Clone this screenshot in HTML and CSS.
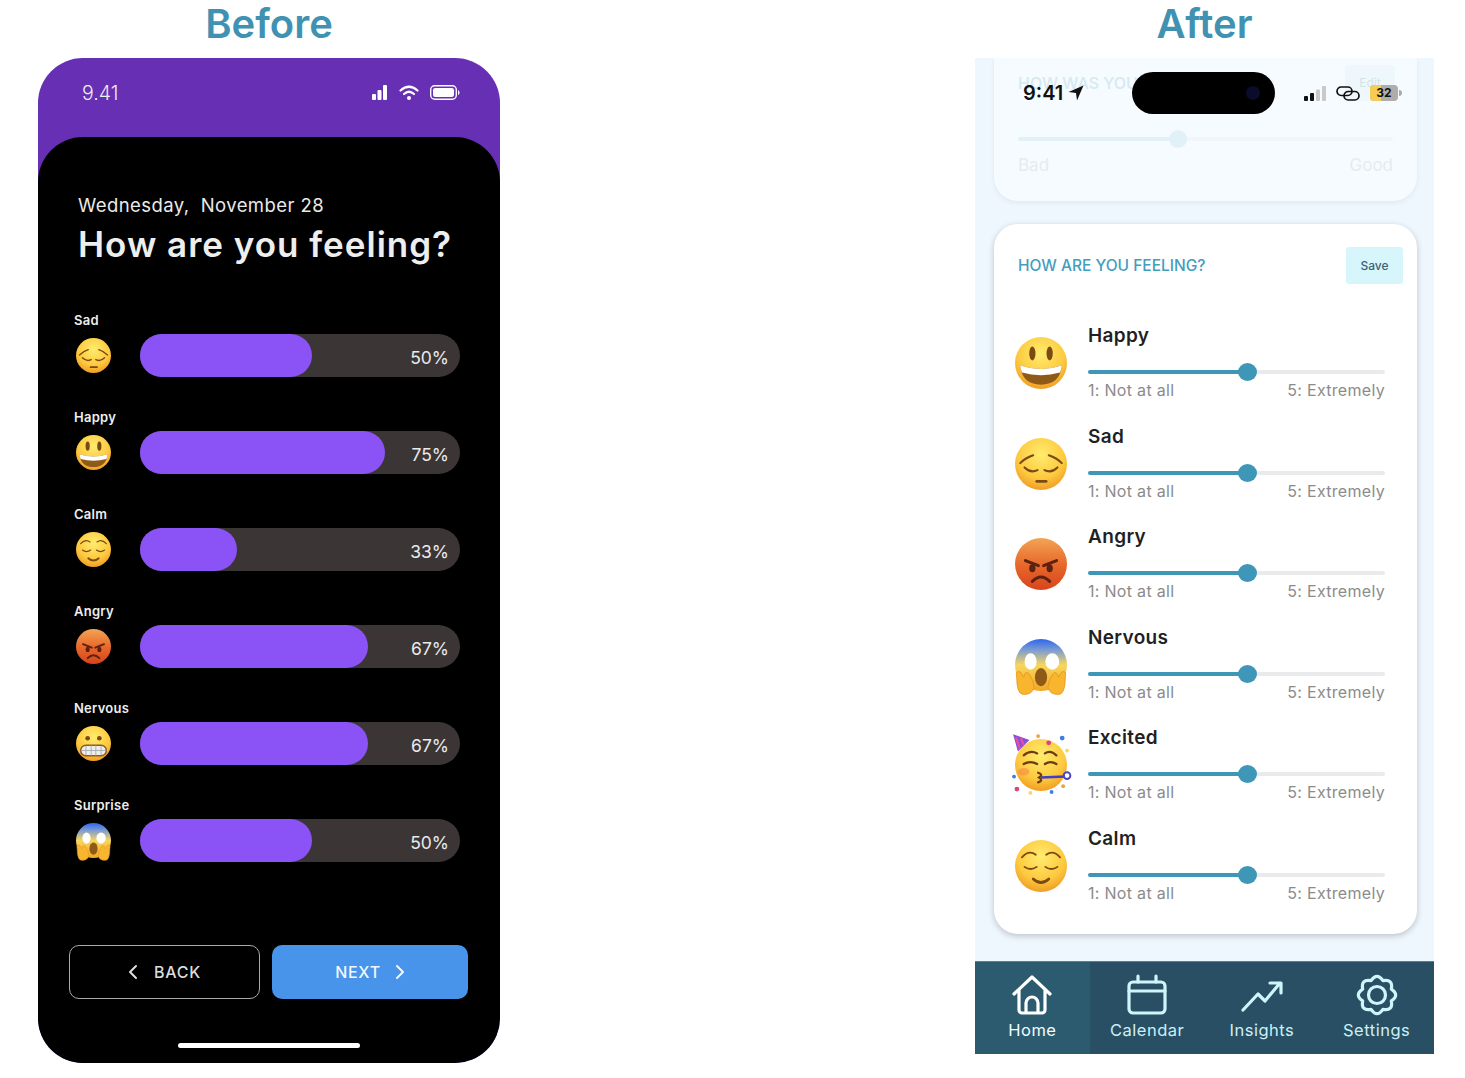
FILE: index.html
```html
<!DOCTYPE html>
<html lang="en">
<head>
<meta charset="utf-8">
<title>Before and After</title>
<link rel="stylesheet" href="styles.css">
</head>
<body>
<svg class="defs" width="0" height="0" aria-hidden="true">
  <defs>
    <radialGradient id="g-face" cx="50%" cy="32%" r="70%">
      <stop offset="0" stop-color="#ffec6e"/><stop offset=".65" stop-color="#fdc93f"/><stop offset="1" stop-color="#ef9a22"/>
    </radialGradient>
    <linearGradient id="g-angry" x1="0" y1="0" x2="0" y2="1">
      <stop offset="0" stop-color="#f2a454"/><stop offset=".5" stop-color="#e86a2c"/><stop offset="1" stop-color="#d8431b"/>
    </linearGradient>
    <linearGradient id="g-scream" x1="0" y1="0" x2="0" y2="1">
      <stop offset="0" stop-color="#2e66ee"/><stop offset=".22" stop-color="#7f9ed0"/><stop offset=".5" stop-color="#f7d65c"/><stop offset="1" stop-color="#f3a726"/>
    </linearGradient>
    <symbol id="e-happy" viewBox="2 2 60 60">
      <circle cx="32" cy="32" r="30" fill="url(#g-face)"/>
      <ellipse cx="22" cy="21" rx="3.600" ry="8" fill="#7a4a12"/><ellipse cx="42" cy="21" rx="3.600" ry="8" fill="#7a4a12"/>
      <path d="M8 35Q32 43 56 35Q54 57 32 57Q10 57 8 35Z" fill="#8f5a18"/>
      <path d="M8 35Q32 43 56 35Q55.600 40 54 43Q32 49 10 43Q8.400 40 8 35Z" fill="#fff"/>
    </symbol>
    <symbol id="e-sad" viewBox="2 2 60 60">
      <circle cx="32" cy="32" r="30" fill="url(#g-face)"/>
      <g fill="none" stroke="#7a4a12" stroke-width="2.400" stroke-linecap="round">
        <path d="M8 31Q14 25 23 22"/><path d="M56 31Q50 25 41 22"/>
        <path d="M13 36Q20 43 28 39"/><path d="M51 36Q44 43 36 39"/>
        <path d="M27 52H38" stroke-width="3"/>
      </g>
    </symbol>
    <symbol id="e-calm" viewBox="2 2 60 60">
      <circle cx="32" cy="32" r="30" fill="url(#g-face)"/>
      <g fill="none" stroke="#7a4a12" stroke-width="2.100" stroke-linecap="round">
        <path d="M10 22Q18 13 26 19"/><path d="M54 22Q46 13 38 19"/>
        <path d="M13 33Q20 38 27 33"/><path d="M51 33Q44 38 37 33"/>
        <path d="M23 47Q32 55 41 47" stroke-width="3.200"/>
      </g>
    </symbol>
    <symbol id="e-angry" viewBox="2 2 60 60">
      <circle cx="32" cy="32" r="30" fill="url(#g-angry)"/>
      <path d="M14 28L29 34" stroke="#5c2110" stroke-width="3.400" stroke-linecap="round"/>
      <path d="M50 28L35 34" stroke="#5c2110" stroke-width="3.400" stroke-linecap="round"/>
      <ellipse cx="22" cy="37" rx="3.600" ry="4.600" fill="#5c2110"/><ellipse cx="42" cy="37" rx="3.600" ry="4.600" fill="#5c2110"/>
      <path d="M22 52Q32 42 42 52" fill="none" stroke="#5c2110" stroke-width="3.400" stroke-linecap="round"/>
    </symbol>
    <symbol id="e-scream" viewBox="2 2 60 60">
      <circle cx="32" cy="32" r="30" fill="url(#g-scream)"/>
      <ellipse cx="20" cy="28" rx="7" ry="9.500" fill="#fff"/><ellipse cx="45" cy="28" rx="8" ry="9.500" fill="#fff"/>
      <ellipse cx="32" cy="46" rx="7" ry="10.500" fill="#8f5a18"/>
      <path d="M4 46Q2 38 8 40L12 46Q14 38 18 42Q24 50 24 58Q22 66 12 66Q4 66 4 46Z" fill="#f8b62f" stroke="#e8961c"/>
      <path d="M60 46Q62 38 56 40L52 46Q50 38 46 42Q40 50 40 58Q42 66 52 66Q60 66 60 46Z" fill="#f8b62f" stroke="#e8961c"/>
    </symbol>
    <symbol id="e-grimace" viewBox="2 2 60 60">
      <circle cx="32" cy="32" r="30" fill="url(#g-face)"/>
      <circle cx="22" cy="23" r="4" fill="#7a4a12"/><circle cx="42" cy="23" r="4" fill="#7a4a12"/>
      <rect x="10" y="35" width="44" height="18" rx="9" fill="#eee" stroke="#8f5a18" stroke-width="2.500"/>
      <path d="M10 44H54M19 36V52M28 35V53M36 35V53M45 36V52" stroke="#a8a8a8" stroke-width="1.500"/>
    </symbol>
    <symbol id="e-party" viewBox="6 8 54 54">
      <circle cx="33" cy="35" r="27" fill="url(#g-face)"/>
      <ellipse cx="15" cy="42" rx="6" ry="4" fill="#f58a4a" opacity=".6"/>
      <path d="M4 3L21 9L9 21Z" fill="#8a4fd8"/>
      <path d="M7 6L11 18M12 7L15 14" stroke="#e84fa0" stroke-width="2.200"/>
      <g fill="none" stroke="#6b3c10" stroke-width="2.300" stroke-linecap="round">
        <path d="M15 25Q22 19 29 23"/><path d="M37 23Q43 19 49 25"/>
        <path d="M15 34Q22 30 29 34"/><path d="M37 34Q43 30 49 34"/>
        <path d="M30 43Q36 45 31 48Q36 51 30 53"/>
      </g>
      <path d="M33 48L58 47" stroke="#3e3fc4" stroke-width="2.500"/>
      <circle cx="60" cy="46" r="3.500" fill="none" stroke="#4d45c8" stroke-width="2"/>
      <circle cx="30" cy="5" r="2" fill="#f0a23a"/><circle cx="41" cy="12" r="2.500" fill="#d9467a"/>
      <circle cx="55" cy="7" r="2.500" fill="#3d7fe0"/><circle cx="60" cy="20" r="2" fill="#f6d95a"/>
      <circle cx="5" cy="47" r="2" fill="#3d7fe0"/><circle cx="8" cy="60" r="2.500" fill="#d9467a"/>
      <circle cx="22" cy="64" r="2" fill="#f6d95a"/><circle cx="44" cy="63" r="2" fill="#3d7fe0"/><circle cx="56" cy="57" r="2" fill="#f0a23a"/>
    </symbol>
  </defs>
</svg>

<main class="page">
  <section class="column">
    <h1 class="title">Before</h1>
    <div class="phone-before">
      <div class="status-before">
        <span class="clock-before">9.41</span>
        <div class="status-icons-before">
          <svg class="ic-signal" viewBox="0 0 16 15"><rect x="0" y="9" width="4" height="6" rx="1"/><rect x="5.500" y="5" width="4" height="10" rx="1"/><rect x="11" y="0" width="4" height="15" rx="1"/></svg>
          <svg class="ic-wifi" viewBox="0 0 20 15"><path d="M1.500 5.500Q10-2 18.500 5.500" fill="none" stroke="#fff" stroke-width="2.200" stroke-linecap="round"/><path d="M5 9Q10 4.500 15 9" fill="none" stroke="#fff" stroke-width="2.200" stroke-linecap="round"/><circle cx="10" cy="13" r="2"/></svg>
          <svg class="ic-batt" viewBox="0 0 30 15"><rect x=".7" y=".7" width="25.600" height="13.600" rx="4" fill="none" stroke="#fff" stroke-width="1.400"/><rect x="3" y="3" width="21" height="9" rx="2.200"/><path d="M28 5v5q1.500-.5 1.500-2.500T28 5Z"/></svg>
        </div>
      </div>
      <div class="panel">
        <p class="date">Wednesday, &nbsp;November 28</p>
        <h2 class="question">How are you feeling?</h2>
        <div class="moods">
          <div class="mood">
            <div class="mood-label">Sad</div>
            <div class="mood-row"><svg class="mood-emoji"><use href="#e-sad"/></svg><div class="track"><div class="fill" style="width:172px"></div><span class="pct">50%</span></div></div>
          </div>
          <div class="mood">
            <div class="mood-label">Happy</div>
            <div class="mood-row"><svg class="mood-emoji"><use href="#e-happy"/></svg><div class="track"><div class="fill" style="width:245px"></div><span class="pct">75%</span></div></div>
          </div>
          <div class="mood">
            <div class="mood-label">Calm</div>
            <div class="mood-row"><svg class="mood-emoji"><use href="#e-calm"/></svg><div class="track"><div class="fill" style="width:97px"></div><span class="pct">33%</span></div></div>
          </div>
          <div class="mood">
            <div class="mood-label">Angry</div>
            <div class="mood-row"><svg class="mood-emoji"><use href="#e-angry"/></svg><div class="track"><div class="fill" style="width:228px"></div><span class="pct">67%</span></div></div>
          </div>
          <div class="mood">
            <div class="mood-label">Nervous</div>
            <div class="mood-row"><svg class="mood-emoji"><use href="#e-grimace"/></svg><div class="track"><div class="fill" style="width:228px"></div><span class="pct">67%</span></div></div>
          </div>
          <div class="mood">
            <div class="mood-label">Surprise</div>
            <div class="mood-row"><svg class="mood-emoji"><use href="#e-scream"/></svg><div class="track"><div class="fill" style="width:172px"></div><span class="pct">50%</span></div></div>
          </div>
        </div>
        <div class="actions">
          <button class="btn btn-back"><svg class="chev" viewBox="0 0 10 16"><path d="M8 2L2 8L8 14"/></svg>BACK</button>
          <button class="btn btn-next">NEXT<svg class="chev" viewBox="0 0 10 16"><path d="M2 2L8 8L2 14"/></svg></button>
        </div>
        <div class="home-bar"></div>
      </div>
    </div>
  </section>

  <section class="column">
    <h1 class="title">After</h1>
    <div class="phone-after">
      <div class="status-after">
        <div class="time-after"><span>9:41</span><svg class="ic-loc" viewBox="0 0 16 16"><path d="M15.500.5L9 15.500L8 8L.5 7Z"/></svg></div>
        <div class="island"><span class="camera"></span></div>
        <div class="status-icons-after">
          <svg class="ic-signal2" viewBox="0 0 22 15"><rect x="0" y="10" width="4" height="5" rx="1" fill="#111"/><rect x="6" y="7" width="4" height="8" rx="1" fill="#111"/><rect x="12" y="3.500" width="4" height="11.500" rx="1" fill="#c9c9c9"/><rect x="18" y="0" width="4" height="15" rx="1" fill="#c9c9c9"/></svg>
          <svg class="ic-link" viewBox="0 0 24 15"><rect x="1" y="1" width="15" height="8.500" rx="4.200" fill="none" stroke="#111" stroke-width="1.700"/><rect x="8" y="5.500" width="15" height="8.500" rx="4.200" fill="none" stroke="#111" stroke-width="1.700"/></svg>
          <div class="battery"><span class="battery-level"></span><span class="battery-num">32</span></div>
          <span class="battery-tip"></span>
        </div>
      </div>

      <div class="faded-card">
        <div class="faded-head"><span class="faded-title">HOW WAS YOUR DAY?</span><span class="faded-edit">Edit</span></div>
        <div class="faded-slider"><div class="faded-fill"></div><span class="faded-thumb"></span></div>
        <div class="faded-labels"><span>Bad</span><span>Good</span></div>
      </div>

      <div class="card">
        <div class="card-head"><span class="card-title">HOW ARE YOU FEELING?</span><span class="save">Save</span></div>
        <div class="feelings">
          <div class="feeling"><svg class="feeling-emoji"><use href="#e-happy"/></svg><div class="feeling-body"><div class="feeling-name">Happy</div><div class="slider"><div class="slider-fill"></div><span class="thumb"></span></div><div class="scale"><span>1: Not at all</span><span>5: Extremely</span></div></div></div>
          <div class="feeling"><svg class="feeling-emoji"><use href="#e-sad"/></svg><div class="feeling-body"><div class="feeling-name">Sad</div><div class="slider"><div class="slider-fill"></div><span class="thumb"></span></div><div class="scale"><span>1: Not at all</span><span>5: Extremely</span></div></div></div>
          <div class="feeling"><svg class="feeling-emoji"><use href="#e-angry"/></svg><div class="feeling-body"><div class="feeling-name">Angry</div><div class="slider"><div class="slider-fill"></div><span class="thumb"></span></div><div class="scale"><span>1: Not at all</span><span>5: Extremely</span></div></div></div>
          <div class="feeling"><svg class="feeling-emoji"><use href="#e-scream"/></svg><div class="feeling-body"><div class="feeling-name">Nervous</div><div class="slider"><div class="slider-fill"></div><span class="thumb"></span></div><div class="scale"><span>1: Not at all</span><span>5: Extremely</span></div></div></div>
          <div class="feeling"><svg class="feeling-emoji"><use href="#e-party"/></svg><div class="feeling-body"><div class="feeling-name">Excited</div><div class="slider"><div class="slider-fill"></div><span class="thumb"></span></div><div class="scale"><span>1: Not at all</span><span>5: Extremely</span></div></div></div>
          <div class="feeling"><svg class="feeling-emoji"><use href="#e-calm"/></svg><div class="feeling-body"><div class="feeling-name">Calm</div><div class="slider"><div class="slider-fill"></div><span class="thumb"></span></div><div class="scale"><span>1: Not at all</span><span>5: Extremely</span></div></div></div>
        </div>
      </div>

      <nav class="tabbar">
        <div class="tab tab-active">
          <svg class="tab-icon tab-icon-home" viewBox="0 0 46 46"><path d="M5 22L23 5L41 22M10 18V38a3 3 0 0 0 3 3H33a3 3 0 0 0 3-3V18M17 41V31a6 6 0 0 1 12 0V41"/></svg>
          <span>Home</span>
        </div>
        <div class="tab">
          <svg class="tab-icon" viewBox="0 0 46 46"><rect x="5" y="10" width="36" height="31" rx="4"/><path d="M5 19H41M14 4V10M32 4V10"/></svg>
          <span>Calendar</span>
        </div>
        <div class="tab">
          <svg class="tab-icon" viewBox="0 0 46 46"><path d="M4 38L19 22L26 29L41 11M31 11H42V21"/></svg>
          <span>Insights</span>
        </div>
        <div class="tab">
          <svg class="tab-icon" viewBox="0 0 46 46"><path d="M37.320 17.070Q46 23 37.320 28.930Q39.260 39.260 28.930 37.320Q23 46 17.070 37.320Q6.740 39.260 8.680 28.930Q0 23 8.680 17.070Q6.740 6.740 17.070 8.680Q23 0 28.930 8.680Q39.260 6.740 37.320 17.070Z"/><circle cx="23" cy="23" r="8.500"/></svg>
          <span>Settings</span>
        </div>
      </nav>
    </div>
  </section>
</main>
</body>
</html>
```

FILE: styles.css
```css
* { box-sizing: border-box; }
html, body { margin: 0; padding: 0; background: #fff; }
body { font-family: "Inter", "Liberation Sans", sans-serif; overflow: hidden; }
.defs { position: absolute; }
symbol, use { overflow: visible; }
.page { display: flex; justify-content: space-between; height: 1078px; padding: 0 31px 0 38px; }
.column { display: flex; flex-direction: column; align-items: center; }
.title { margin: 0; height: 58px; line-height: 48px; font-size: 40px; font-weight: 600; color: #3f92b1; }

/* Before */
.phone-before { width: 462px; height: 1005px; display: flex; flex-direction: column; background: #672fb4; border-radius: 45px; overflow: hidden; }
.status-before { height: 79px; flex: none; display: flex; justify-content: space-between; padding: 23px 40px 0 44px; color: #fff; }
.clock-before { font-size: 19.500px; line-height: 24px; font-weight: 300; color: #eee; }
.status-icons-before { display: flex; gap: 11px; height: 22px; align-items: center; fill: #fff; }
.ic-signal { width: 16px; height: 15px; }
.ic-wifi { width: 20px; height: 15px; }
.ic-batt { width: 30px; height: 15px; }
.panel { flex: 1; display: flex; flex-direction: column; background: #000; border-radius: 45px 45px 0 0; padding: 56px 31px 0; }
.date { margin: 0 0 0 9px; font-size: 18.500px; line-height: 24px; letter-spacing: .42px; color: #eaeaea; white-space: nowrap; }
.question { margin: 5px 0 0 9px; font-size: 35px; line-height: 44px; font-weight: 600; letter-spacing: 1px; color: #eee; white-space: nowrap; }
.moods { display: flex; flex-direction: column; gap: 32px; margin-top: 46px; padding: 0 9px 0 5px; }
.mood-label { font-size: 13px; line-height: 16px; font-weight: 600; letter-spacing: .25px; color: #eee; }
.mood-row { display: flex; align-items: flex-start; margin-top: 6px; }
.mood-emoji { width: 35px; height: 35px; flex: none; margin: 4px 0 0 2px; overflow: visible; }
.track { position: relative; width: 320px; height: 43px; margin-left: 29px; background: #3c3535; border-radius: 22px; }
.fill { height: 43px; background: #8b52f6; border-radius: 22px; }
.pct { position: absolute; right: 11px; top: 0; line-height: 48px; font-size: 17.500px; color: #eaeaea; }
.actions { display: flex; gap: 12px; margin-top: 83px; }
.btn { height: 54px; display: flex; align-items: center; justify-content: center; gap: 16px; font: 500 16px/1 "Inter", sans-serif; letter-spacing: .7px; border-radius: 10px; padding: 0; }
.btn-back { width: 191px; background: #000; color: #ddd; border: 1.500px solid #a9a9a9; }
.btn-next { width: 196px; gap: 14px; background: #4794ea; color: #f2f8ff; border: 0; }
.chev { width: 10px; height: 16px; fill: none; stroke: currentColor; stroke-width: 2; stroke-linecap: round; stroke-linejoin: round; }
.home-bar { align-self: center; width: 182px; height: 5px; margin-top: 44px; background: #fff; border-radius: 3px; }

/* After */
.phone-after { position: relative; width: 459px; height: 996px; display: flex; flex-direction: column; background: #eff7fe; overflow: hidden; }
.status-after { position: absolute; top: 14px; left: 48px; right: 32px; height: 42px; display: flex; align-items: center; }
.time-after { display: flex; align-items: center; gap: 5px; width: 62px; font-size: 20px; font-weight: 600; color: #111; }
.ic-loc { width: 16px; height: 16px; flex: none; fill: #111; }
.island { display: flex; align-items: center; justify-content: flex-end; width: 143px; height: 42px; margin-left: 47px; padding-right: 15px; background: #000; border-radius: 21px; }
.camera { width: 14px; height: 14px; border-radius: 50%; background: #0b0b2b; }
.status-icons-after { display: flex; align-items: center; margin-left: auto; }
.ic-signal2 { width: 22px; height: 15px; }
.ic-link { width: 24px; height: 15px; margin-left: 10px; }
.battery { position: relative; width: 28px; height: 16px; margin-left: 10px; background: #adadad; border-radius: 4px; overflow: hidden; text-align: center; }
.battery-level { position: absolute; left: 0; top: 0; bottom: 0; width: 11px; background: #f5cd55; }
.battery-num { position: relative; font-size: 12px; line-height: 16px; font-weight: 700; color: #111; display: block; }
.battery-tip { width: 3px; height: 6px; margin-left: 1px; background: #aaa; border-radius: 0 3px 3px 0; }

.faded-card { flex: none; height: 143px; margin: 0 17px 0 19px; padding: 7px 24px 0; background: #f6fbff; border-radius: 0 0 24px 24px; box-shadow: 0 2px 5px rgba(0, 0, 0, .06); }
.faded-head { display: flex; justify-content: space-between; height: 36px; }
.faded-title { font-size: 16px; line-height: 36px; font-weight: 500; color: #d5e9f3; white-space: nowrap; }
.faded-edit { width: 50px; height: 36px; margin-right: -2px; text-align: center; line-height: 36px; font-size: 12px; color: #d4e2ea; background: #eef8fc; border-radius: 3px; }
.faded-slider { position: relative; height: 4px; margin-top: 36px; background: #f0f6fa; border-radius: 2px; }
.faded-fill { width: 160px; height: 4px; background: #e2f0f8; border-radius: 2px; }
.faded-thumb { position: absolute; left: 151px; top: -7px; width: 18px; height: 18px; border-radius: 50%; background: #e2f0f8; }
.faded-labels { display: flex; justify-content: space-between; margin-top: 13px; font-size: 17px; line-height: 22px; color: #e6ebef; }

.card { flex: none; height: 710px; margin: 23px 17px 0 19px; padding: 23px 14px 0 0; background: #fff; border-radius: 24px; box-shadow: 0 2px 6px rgba(0, 0, 0, .22); }
.card-head { display: flex; justify-content: space-between; align-items: center; padding-left: 24px; }
.card-title { font-size: 15.500px; font-weight: 500; color: #439ebd; white-space: nowrap; }
.save { width: 57px; height: 37px; line-height: 37px; text-align: center; font-size: 12px; font-weight: 500; color: #3e6275; background: #d6f6fc; border-radius: 3px; }
.feelings { display: flex; flex-direction: column; gap: 24.600px; margin-top: 40px; padding-left: 21px; }
.feeling { display: flex; align-items: flex-start; gap: 21px; }
.feeling-emoji { width: 52px; height: 52px; flex: none; margin-top: 13px; overflow: visible; }
.feeling-body { width: 297px; }
.feeling-name { font-size: 19px; line-height: 24px; font-weight: 600; letter-spacing: .35px; color: #1f1f24; }
.slider { position: relative; height: 4px; margin-top: 22px; background: #e9eaec; border-radius: 2px; }
.slider-fill { width: 160px; height: 4px; background: #3f97b8; border-radius: 2px; }
.thumb { position: absolute; left: 150px; top: -7px; width: 19px; height: 18px; border-radius: 50%; background: #3f97b8; }
.scale { display: flex; justify-content: space-between; margin-top: 6px; font-size: 16px; line-height: 20px; letter-spacing: .3px; color: #8b8b8b; }

.tabbar { flex: none; display: flex; height: 93px; margin-top: auto; background: #284f63; border-top: 1px solid #5d8090; }
.tab { flex: 1; display: flex; flex-direction: column; align-items: center; padding-top: 10px; font-size: 16.500px; line-height: 20px; letter-spacing: .5px; color: #cdeff6; }
.tab-active { background: #2c5b70; color: #f0fbfd; }
.tab-icon { width: 46px; height: 46px; margin-bottom: 2px; fill: none; stroke: #cff5fb; stroke-width: 3.200; stroke-linecap: round; stroke-linejoin: round; }
.tab-icon-home { stroke: #fff; }
```
